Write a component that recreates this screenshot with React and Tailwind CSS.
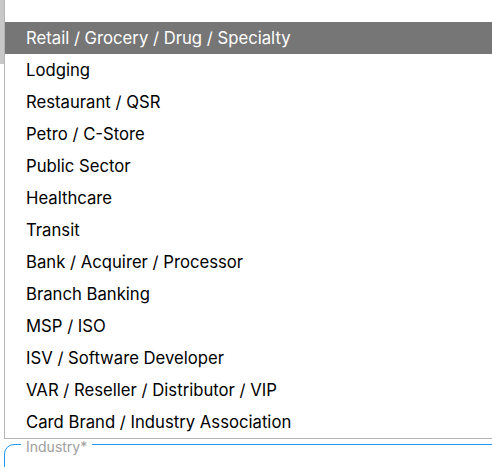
import React from "react";

const industries = [
  "Retail / Grocery / Drug / Specialty",
  "Lodging",
  "Restaurant / QSR",
  "Petro / C-Store",
  "Public Sector",
  "Healthcare",
  "Transit",
  "Bank / Acquirer / Processor",
  "Branch Banking",
  "MSP / ISO",
  "ISV / Software Developer",
  "VAR / Reseller / Distributor / VIP",
  "Card Brand / Industry Association",
];

export default function App() {
  const selected = 0;

  return (
    <div
      className="relative w-full h-[467px] overflow-hidden bg-white"
      style={{ fontFamily: 'Inter, "Liberation Sans", Arial, sans-serif' }}
    >
      {/* scrollbar remnant */}
      <div className="absolute left-0 top-0 w-[4px] h-[64px] bg-[#c8c8c8] z-20"></div>

      {/* Dropdown list */}
      <ul className="relative z-10 ml-[4px] pt-[22px] bg-white border-l border-b border-[#b4b4b4]">
        {industries.map((name, i) => (
          <li
            key={name}
            className={
              i === selected
                ? "h-8 flex items-center pl-[21px] pt-px text-[16.7px] bg-[#767676] text-white"
                : "h-8 flex items-center pl-[21px] pt-px text-[16.7px] text-black"
            }
          >
            {name}
          </li>
        ))}
      </ul>

      {/* Industry field */}
      <div className="relative mt-[5px] ml-[4px] -mr-[20px] h-[60px] border border-[#2196f3] rounded-tl-[10px]">
        <span className="absolute left-[16px] -top-[6px] px-[5px] bg-white text-[14px] leading-[16px] text-[#9e9e9e]">
          Industry*
        </span>
      </div>
    </div>
  );
}
